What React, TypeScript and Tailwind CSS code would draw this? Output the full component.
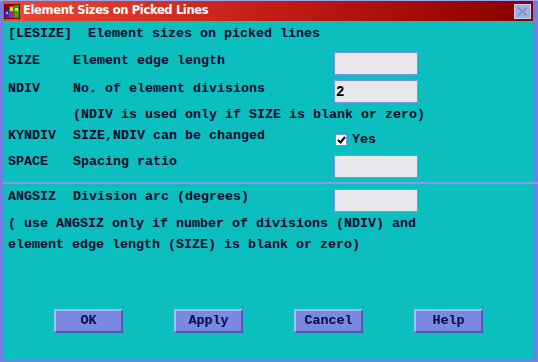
import React from "react";

const mono = { fontFamily: '"Liberation Mono", "DejaVu Sans Mono", monospace' };

function Field({ value }: { value?: string }) {
  return (
    <div className="w-[84px] h-[23px] bg-[#e8e8ec] border border-[#7f90e8] flex items-center pl-[1px] text-[14px] font-bold text-black leading-none">
      {value}
    </div>
  );
}

function Btn({ label }: { label: string }) {
  return (
    <div className="w-[69px] h-[24px] bg-[#7a8ae2] border-t-2 border-l-2 border-[#a9b6f4] border-b-2 border-r-2 border-b-[#4e5cb0] border-r-[#4e5cb0] flex items-center justify-center text-[13.33px] font-bold text-[#0a0a4a]">
      {label}
    </div>
  );
}

export default function App() {
  return (
    <div
      className="w-[538px] h-[362px] bg-[#6f7fe2] flex flex-col overflow-hidden"
      style={mono}
    >
      <div className="h-[1px] bg-[#9aa6ee]" />
      <div className="h-[20px] ml-[3px] mr-[5px] flex items-center bg-gradient-to-r from-[#ec4634] via-[#c41c14] to-[#8a0000]">
        <svg width="16" height="15" viewBox="0 0 16 15" className="ml-[1px]">
          <rect x="0" y="0" width="16" height="15" fill="#7a0000" />
          <rect x="1" y="6" width="4" height="8" fill="#2030d0" />
          <rect x="2" y="8" width="2" height="2" fill="#60d0ff" />
          <rect x="5" y="2" width="5" height="12" fill="#c02080" />
          <rect x="6" y="3" width="3" height="4" fill="#ffe000" />
          <rect x="10" y="1" width="5" height="13" fill="#20a020" />
          <rect x="11" y="4" width="3" height="3" fill="#ffe000" />
          <rect x="11" y="9" width="3" height="3" fill="#ff4040" />
        </svg>
        <span
          className="ml-[3px] text-white font-bold tracking-[-0.35px]"
          style={{ fontFamily: '"DejaVu Sans", Verdana, sans-serif', fontSize: "11.5px" }}
        >
          Element Sizes on Picked Lines
        </span>
        <div className="ml-auto mr-[2px] w-[17px] h-[15px] bg-[#9fb0e4] border border-[#c8d2f2] flex items-center justify-center">
          <svg width="11" height="9" viewBox="0 0 11 9">
            <path d="M1 0.5 L10 8.5 M10 0.5 L1 8.5" stroke="#7d8cc0" strokeWidth="1.6" />
          </svg>
        </div>
      </div>
      <div className="flex-1 ml-[3px] mr-[5px] mb-[3px] bg-[#0bbfbf] flex flex-col text-[13.33px] font-bold text-[#06062a] leading-[16px]">
        <div className="h-[5px]" />
        <div className="pl-[5px] whitespace-pre">[LESIZE]  Element sizes on picked lines</div>
        <div className="h-[9px]" />
        <div className="h-[24px] flex pl-[5px]">
          <div className="w-[65px] pt-[2px]">SIZE</div>
          <div className="w-[261px] pt-[2px]">Element edge length</div>
          <div className="mt-[1px]"><Field /></div>
        </div>
        <div className="h-[4px]" />
        <div className="h-[24px] flex pl-[5px]">
          <div className="w-[65px] pt-[2px]">NDIV</div>
          <div className="w-[261px] pt-[2px]">No. of element divisions</div>
          <div className="mt-[1px]"><Field value="2" /></div>
        </div>
        <div className="h-[2px]" />
        <div className="pl-[70px] pt-[2px]">(NDIV is used only if SIZE is blank or zero)</div>
        <div className="h-[3px]" />
        <div className="h-[20px] flex pl-[5px]">
          <div className="w-[65px] pt-[2px]">KYNDIV</div>
          <div className="w-[262px] pt-[2px]">SIZE,NDIV can be changed</div>
          <div className="mt-[8px] w-[12px] h-[12px] bg-white border border-[#7f90e8] flex items-center justify-center">
            <svg width="9" height="8" viewBox="0 0 9 8">
              <path d="M1 4 L3.5 6.5 L8 1" stroke="#000" strokeWidth="2" fill="none" />
            </svg>
          </div>
          <div className="ml-[5px] mt-[6px]">Yes</div>
        </div>
        <div className="h-[6px]" />
        <div className="h-[25px] flex pl-[5px]">
          <div className="w-[65px] pt-[2px]">SPACE</div>
          <div className="w-[261px] pt-[2px]">Spacing ratio</div>
          <div className="mt-[3px]"><Field /></div>
        </div>
        <div className="h-[5px]" />
        <div className="h-[2px] bg-[#8a98ea] -mr-[5px]" />
        <div className="h-[3px]" />
        <div className="h-[24px] flex pl-[5px]">
          <div className="w-[65px] pt-[2px]">ANGSIZ</div>
          <div className="w-[261px] pt-[2px]">Division arc (degrees)</div>
          <div className="mt-[2px]"><Field /></div>
        </div>
        <div className="h-[3px]" />
        <div className="pl-[5px] pt-[2px]">( use ANGSIZ only if number of divisions (NDIV) and</div>
        <div className="h-[3px]" />
        <div className="pl-[5px] pt-[2px]">element edge length (SIZE) is blank or zero)</div>
        <div className="flex-1" />
        <div className="flex pl-[51px] gap-[51px]">
          <Btn label="OK" />
          <Btn label="Apply" />
          <Btn label="Cancel" />
          <Btn label="Help" />
        </div>
        <div className="h-[26px]" />
      </div>
    </div>
  );
}
